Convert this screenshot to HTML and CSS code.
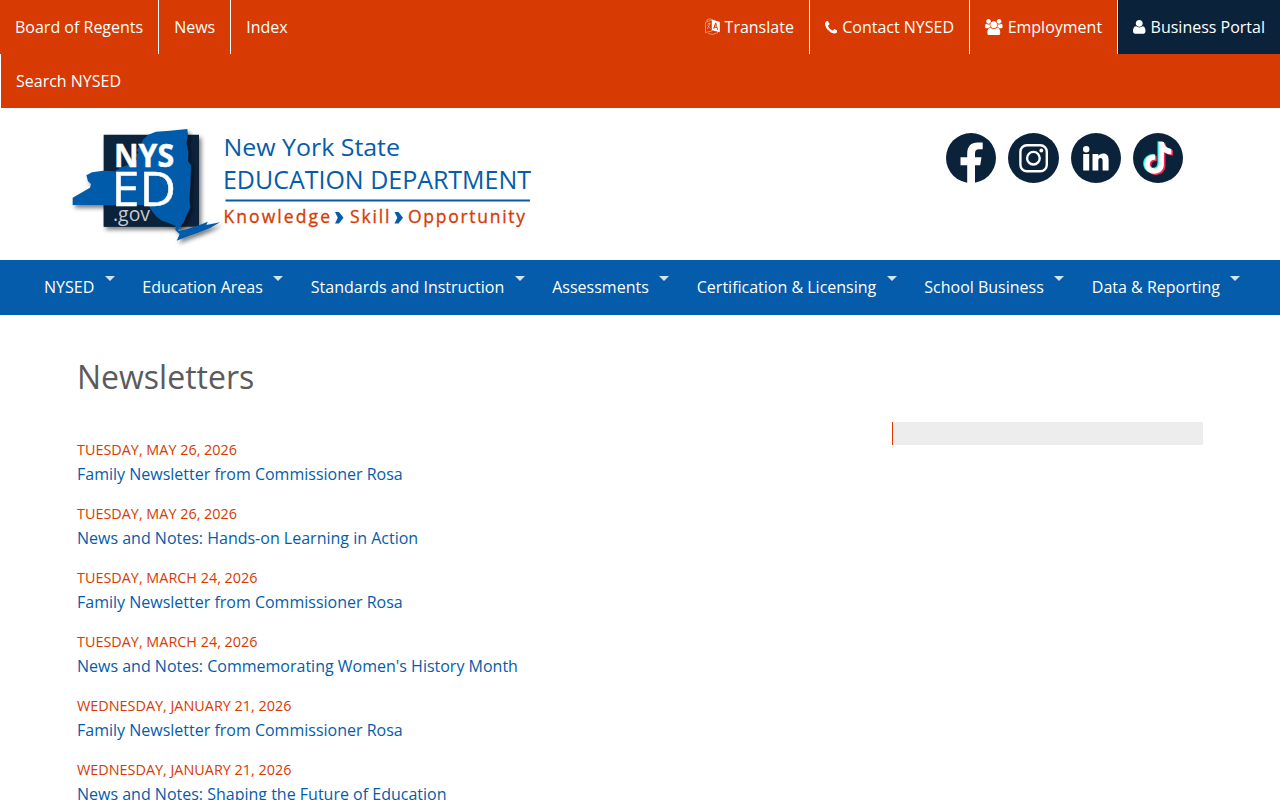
FILE: index.html
```html
<!DOCTYPE html>
<html lang="en">
<head>
<meta charset="utf-8">
<title>Newsletters | New York State Education Department</title>
<link rel="stylesheet" href="styles.css">
</head>
<body>
<nav class="topbar">
  <div class="topbar-row">
    <ul class="links">
      <li><a href="#">Board of Regents</a></li>
      <li><a href="#">News</a></li>
      <li><a href="#">Index</a></li>
    </ul>
    <ul class="links">
      <li><a href="#"><svg class="icon" width="15" height="17" viewBox="0 0 15 17"><g fill="none" stroke="#fff" stroke-opacity=".6" stroke-width=".7"><path d="M.5 4.200 7 2v10.800L.5 14.600zM2 3.500V1.800L5 .7l2.500 1.200M3 15.300l4.500 1.200 5-1.600v-1M2.200 6.200l3.400-1M4 4.600v1.200M5 5.600 2.300 11M2.600 7.500l3 3"/></g><path fill="#fff" fill-rule="evenodd" d="M7 1.600 14.800 4v10.300L7 12.200zM9.200 10.900l.5-1.300 2 .5.500 1.700 1 .3-2-7-1-.3-2 5.800zM10.900 6.300l.7 2.800-1.400-.4z"/></svg> Translate</a></li>
      <li><a href="#"><svg class="icon phone" width="12.570" height="12.570" viewBox="0 0 1408 1408"><path fill="#fff" d="M1408 1112q0 27-10 70.500t-21 68.500q-21 50-122 106-94 51-186 51-27 0-53-3.500t-57-12.500-47-14.500-55.500-20.500-49-18q-98-35-175-83-127-79-264-216t-216-264q-48-77-83-175-3-9-18-49t-20.500-55.500-14.500-47-12.500-57-3.500-53q0-92 51-186 56-101 106-122 25-11 68.500-21t70.500-10q14 0 21 3 18 6 53 76 11 19 30 54t35 63.500 31 53.500q3 4 17.500 25t21.500 35.500 7 28.500q0 20-28.500 50t-62 55-62 53-28.500 46q0 9 5 22.500t8.500 20.500 14 24 11.500 19q76 137 174 235t235 174q2 1 19 11.500t24 14 20.500 8.500 22.500 5q18 0 46-28.500t53-62 55-62 50-28.500q14 0 28.500 7t35.500 21.500 25 17.500q25 15 53.500 31t63.500 35 54 30q70 35 76 53 3 7 3 21z"/></svg> Contact NYSED</a></li>
      <li><a href="#"><svg class="icon group" width="17.600" height="16.400" viewBox="0 0 1920 1792"><path fill="#fff" d="M593 896q-162 5-265 128h-134q-82 0-138-40.500t-56-118.500q0-353 124-353 6 0 43.500 21t97.500 42.500 119 21.500q67 0 133-23-5 37-5 66 0 139 81 256zm1071 637q0 120-73 189.500t-194 69.500h-874q-121 0-194-69.500t-73-189.500q0-53 3.500-103.500t14-109 26.500-108.500 43-97.500 62-81 85.500-53.500 111.500-20q10 0 43 21.500t73 48 107 48 135 21.500 135-21.500 107-48 73-48 43-21.500q61 0 111.500 20t85.500 53.500 62 81 43 97.500 26.500 108.500 14 109 3.500 103.500zm-1024-1277q0 106-75 181t-181 75-181-75-75-181 75-181 181-75 181 75 75 181zm704 384q0 159-112.500 271.500t-271.500 112.500-271.500-112.500-112.500-271.500 112.500-271.500 271.500-112.500 271.500 112.500 112.500 271.500zm576 225q0 78-56 118.500t-138 40.500h-134q-103-123-265-128 81-117 81-256 0-29-5-66 66 23 133 23 59 0 119-21.500t97.500-42.500 43.500-21q124 0 124 353zm-128-609q0 106-75 181t-181 75-181-75-75-181 75-181 181-75 181 75 75 181z"/></svg> Employment</a></li>
      <li class="portal"><a href="#"><svg class="icon person" width="12.500" height="13.700" viewBox="0 0 1400 1536" preserveAspectRatio="xMinYMid"><path fill="#fff" d="M1400 1271q0 109-67 187t-162 78h-942q-95 0-162-78t-67-187q0-85 9-160t34-152 64-131 103-89 148-35q142 128 342 128t342-128q83 0 148 35t103 89 64 131 34 152 9 160zm-310-887q0 159-114 271t-276 113-276-113-114-271 114-271 276-113 276 113 114 271z"/></svg> Business Portal</a></li>
    </ul>
  </div>
  <ul class="links">
    <li class="search"><a href="#">Search NYSED</a></li>
  </ul>
</nav>

<header class="banner">
  <svg class="logo" width="480" height="140" viewBox="60 115 480 140">
    <defs>
      <filter id="shadow" x="-10%" y="-10%" width="130%" height="130%"><feDropShadow dx="7" dy="9" stdDeviation="7" flood-opacity=".5"/></filter>
      <clipPath id="box"><path d="M131 59h286v276H131z"/></clipPath>
    </defs>
    <g transform="translate(60 115) scale(.33333)">
      <path filter="url(#shadow)" fill="#0a233b" d="M131 59h286v276H131z"/>
      <path filter="url(#shadow)" fill="#055caa" d="M38 248 90 218 93 207 84 199 79 181 96 172 130 167 165 169 181 158 201 151 214 152 232 133 228 119 236 113 229 105 243 91 248 75 265 59 288 50 330 47 382 42 384 58 379 83 385 111 384 139 393 151 391 210 388 257 391 277 381 298 372 319 362 334 354 348 382 342 419 330 443 320 439 330 480 322 452 338 414 353 384 364 350 377 359 358 346 345 347 334 323 323 306 318 290 306 277 291 264 270 38 270z"/>
      <path clip-path="url(#box)" fill="#0a233b" d="M131 270h133l13 21 13 15 16 12 17 5 24 11v1H131z"/>
    </g>
    <g font-family="Open Sans, sans-serif" fill="#fff">
      <text x="114" y="166.700" font-size="32" font-weight="700" stroke="#fff" stroke-width=".5" textLength="60" lengthAdjust="spacingAndGlyphs">NYS</text>
      <text x="111.500" y="206" font-size="47" stroke="#fff" stroke-width=".5" textLength="64.500" lengthAdjust="spacingAndGlyphs">ED</text>
      <text x="113" y="221" font-size="20" fill="#c5cad1" textLength="37" lengthAdjust="spacingAndGlyphs">.gov</text>
    </g>
    <g font-family="Open Sans, sans-serif" fill="#055caa">
      <text x="223.500" y="156" font-size="24.500" textLength="176.500" lengthAdjust="spacingAndGlyphs">New York State</text>
      <text x="223" y="188.700" font-size="25" textLength="308" lengthAdjust="spacingAndGlyphs">EDUCATION DEPARTMENT</text>
      <path d="M225.500 199.600h304.500v2H225.500z"/>
      <path d="M335 212h4l4.500 5.700-4.500 5.700h-4l2.800-5.700zM394.500 212h4l4.500 5.700-4.500 5.700h-4l2.800-5.700z"/>
    </g>
    <g font-family="Open Sans, sans-serif" font-size="17.500" fill="#d73a02" stroke="#d73a02" stroke-width=".3">
      <text x="223.500" y="223" textLength="106.500">Knowledge</text>
      <text x="350" y="223" textLength="39.500">Skill</text>
      <text x="408" y="223" textLength="117">Opportunity</text>
    </g>
  </svg>
  <div class="social">
    <a href="#" aria-label="Facebook"><svg width="50" height="50" viewBox="0 0 50 50"><circle cx="25" cy="25" r="25" fill="#0a233b"/><path fill="#fff" d="M21.200 50V32.300h-6.700v-8h6.700v-3.500c0-7.500 4-11.300 10.300-11.300h5.200v6.800h-3.500c-3 0-4.200 1.200-4.200 4v4h6.500l-1.300 8H29V50z"/></svg></a>
    <a href="#" aria-label="Instagram"><svg width="51" height="50" viewBox="0 0 51 50"><ellipse cx="25.500" cy="25" rx="25.500" ry="25" fill="#0a233b"/><g fill="none" stroke="#fff" stroke-width="2.400"><rect x="12.400" y="12.200" width="26.400" height="26" rx="6.500"/><circle cx="25.400" cy="25.200" r="6.300"/></g><circle cx="33.300" cy="17.500" r="1.900" fill="#fff"/></svg></a>
    <a href="#" aria-label="LinkedIn"><svg width="50" height="50" viewBox="0 0 50 50"><circle cx="25" cy="25" r="25" fill="#0a233b"/><g fill="#fff"><circle cx="15.200" cy="16.300" r="3.200"/><path d="M12.200 21h6v16.500h-6zM21.500 21h5.800v2c1-1.500 2.800-2.400 5-2.400 3.700 0 5.300 2.400 5.300 6.400v10.500h-6V28c0-2-.7-3-2.200-3-1.400 0-2.100 1.200-2.100 3v9.500h-5.800z"/></g></svg></a>
    <a href="#" aria-label="TikTok"><svg width="50" height="50" viewBox="0 0 50 50"><circle cx="25" cy="25" r="25" fill="#0a233b"/><defs><path id="note" d="M25.800 9h5.200c.6 4.200 3.200 6.600 7.400 7v5.200c-2.900 0-5.300-.8-7.500-2.300v12.600c0 5.300-4.300 9.300-9.700 9.300s-9.700-4.300-9.700-9.700 4.500-9.900 10.700-9.500v5.300c-3.200-.4-5.400 1.500-5.400 4.200 0 2.500 2 4.400 4.400 4.400 2.700 0 4.600-2 4.600-5z"/></defs><use href="#note" fill="#25f4ee" x="-1.300" y="-.7"/><use href="#note" fill="#fe2c55" x="1.500" y="1.200"/><use href="#note" fill="#fff"/></svg></a>
  </div>
</header>

<nav class="mainnav">
  <ul>
    <li><a href="#">NYSED</a></li>
    <li><a href="#">Education Areas</a></li>
    <li><a href="#">Standards and Instruction</a></li>
    <li><a href="#">Assessments</a></li>
    <li><a href="#">Certification &amp; Licensing</a></li>
    <li><a href="#">School Business</a></li>
    <li><a href="#">Data &amp; Reporting</a></li>
  </ul>
</nav>

<main class="page">
  <h1>Newsletters</h1>
  <div class="columns">
    <div class="news">
      <article><time>Tuesday, May 26, 2026</time><a href="#">Family Newsletter from Commissioner Rosa</a></article>
      <article><time>Tuesday, May 26, 2026</time><a href="#">News and Notes: Hands-on Learning in Action</a></article>
      <article><time>Tuesday, March 24, 2026</time><a href="#">Family Newsletter from Commissioner Rosa</a></article>
      <article><time>Tuesday, March 24, 2026</time><a href="#">News and Notes: Commemorating Women's History Month</a></article>
      <article><time>Wednesday, January 21, 2026</time><a href="#">Family Newsletter from Commissioner Rosa</a></article>
      <article><time>Wednesday, January 21, 2026</time><a href="#">News and Notes: Shaping the Future of Education</a></article>
    </div>
    <aside class="sidebar"></aside>
  </div>
</main>
</body>
</html>
```
FILE: styles.css
```css
* { box-sizing: border-box; }

body {
  margin: 0;
  height: 800px;
  overflow: hidden;
  background: #fff;
  color: #555;
  font-family: "Open Sans", sans-serif;
  font-size: 16px;
}

a { color: #055caa; text-decoration: none; }
ul { list-style: none; margin: 0; padding: 0; }

.topbar { background: #d73a02; height: 108px; }
.topbar-row { display: flex; justify-content: space-between; }
.links { display: flex; }
.links a {
  display: block;
  height: 54px;
  padding: 0 15px;
  line-height: 54px;
  color: #fff;
  white-space: nowrap;
}
.links li + li, .links .search { border-left: 1px solid #fff; }
.links .portal { background: #0a233b; }
.icon { vertical-align: -2px; }
.phone { margin-right: .6px; vertical-align: -1px; }
.group { margin-right: .8px; }
.person { margin-right: .8px; vertical-align: -1px; }

.banner {
  display: flex;
  justify-content: space-between;
  height: 152px;
  padding: 7px 97px 0 60px;
}
.logo { display: block; }
.social { display: flex; gap: 12px; padding-top: 18px; }
.social svg { display: block; }

.mainnav { background: #055caa; height: 55px; }
.mainnav ul { display: flex; padding-left: 44px; }
.mainnav a {
  display: block;
  position: relative;
  padding-right: 48px;
  line-height: 54px;
  color: #fff;
  white-space: nowrap;
}
.mainnav a::after {
  content: "";
  position: absolute;
  top: 16px;
  right: 27.7px;
  border: 5px solid transparent;
  border-top-color: #d5e3f1;
  border-bottom: 0;
}

.page { padding: 38px 77px 0; }
h1 {
  margin: 0;
  font-size: 32px;
  font-weight: 400;
  line-height: 48px;
  color: #5b5b5b;
}
.columns { display: flex; justify-content: space-between; padding-top: 21px; }
.news { padding-top: 16px; }
.news article { height: 64px; }
.news time {
  display: block;
  font-size: 14.4px;
  line-height: 24px;
  text-transform: uppercase;
  color: #d73a02;
}
.news a { display: block; line-height: 24px; }
.sidebar {
  width: 311px;
  height: 23px;
  border-left: 1px solid #d73a02;
  background: #ededed;
}
```
